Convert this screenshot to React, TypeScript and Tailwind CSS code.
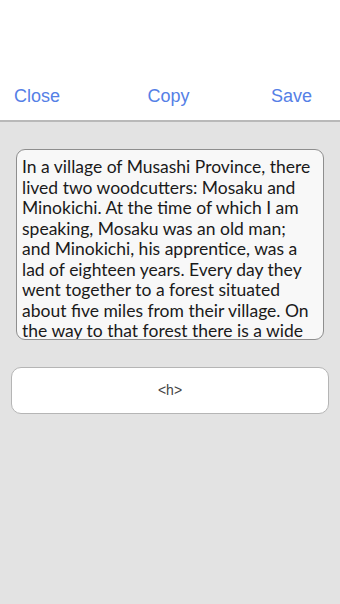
import React from 'react';

const lines = [
  'In a village of Musashi Province, there',
  'lived two woodcutters: Mosaku and',
  'Minokichi. At the time of which I am',
  'speaking, Mosaku was an old man;',
  'and Minokichi, his apprentice, was a',
  'lad of eighteen years. Every day they',
  'went together to a forest situated',
  'about five miles from their village. On',
  'the way to that forest there is a wide',
];

const navBtn = "text-[18px] text-[#5580e6] leading-none";

export default function App() {
  return (
    <div className="w-[340px] h-[604px] bg-[#e3e3e3] flex flex-col font-['Liberation_Sans',sans-serif]">
      {/* Header */}
      <div className="h-[122px] shrink-0 bg-white flex items-start justify-between pl-[14px] pr-[28px] pt-[87px] border-b-2 border-[#b9b9b9]">
        <button className={navBtn}>Close</button>
        <button className={navBtn + " ml-[6px]"}>Copy</button>
        <button className={navBtn}>Save</button>
      </div>

      {/* Text box */}
      <div className="mt-[27px] mx-[16px] h-[191px] shrink-0 rounded-[9px] border border-[#8e8e8e] bg-[#f8f8f8] overflow-hidden pl-[5px] pt-[7px]">
        <div className="font-['Lato',sans-serif] text-[17.5px] leading-[20.5px] text-[#1a1a1a]">
          {lines.map((l, i) => (
            <div key={i} className="whitespace-nowrap">{l}</div>
          ))}
        </div>
      </div>

      {/* Input button */}
      <div className="mt-[27px] mx-[11px] h-[47px] shrink-0 rounded-[10px] border border-[#b5b5b5] bg-white flex items-center justify-center">
        <span className="text-[14px] text-[#444]">&lt;h&gt;</span>
      </div>
    </div>
  );
}
